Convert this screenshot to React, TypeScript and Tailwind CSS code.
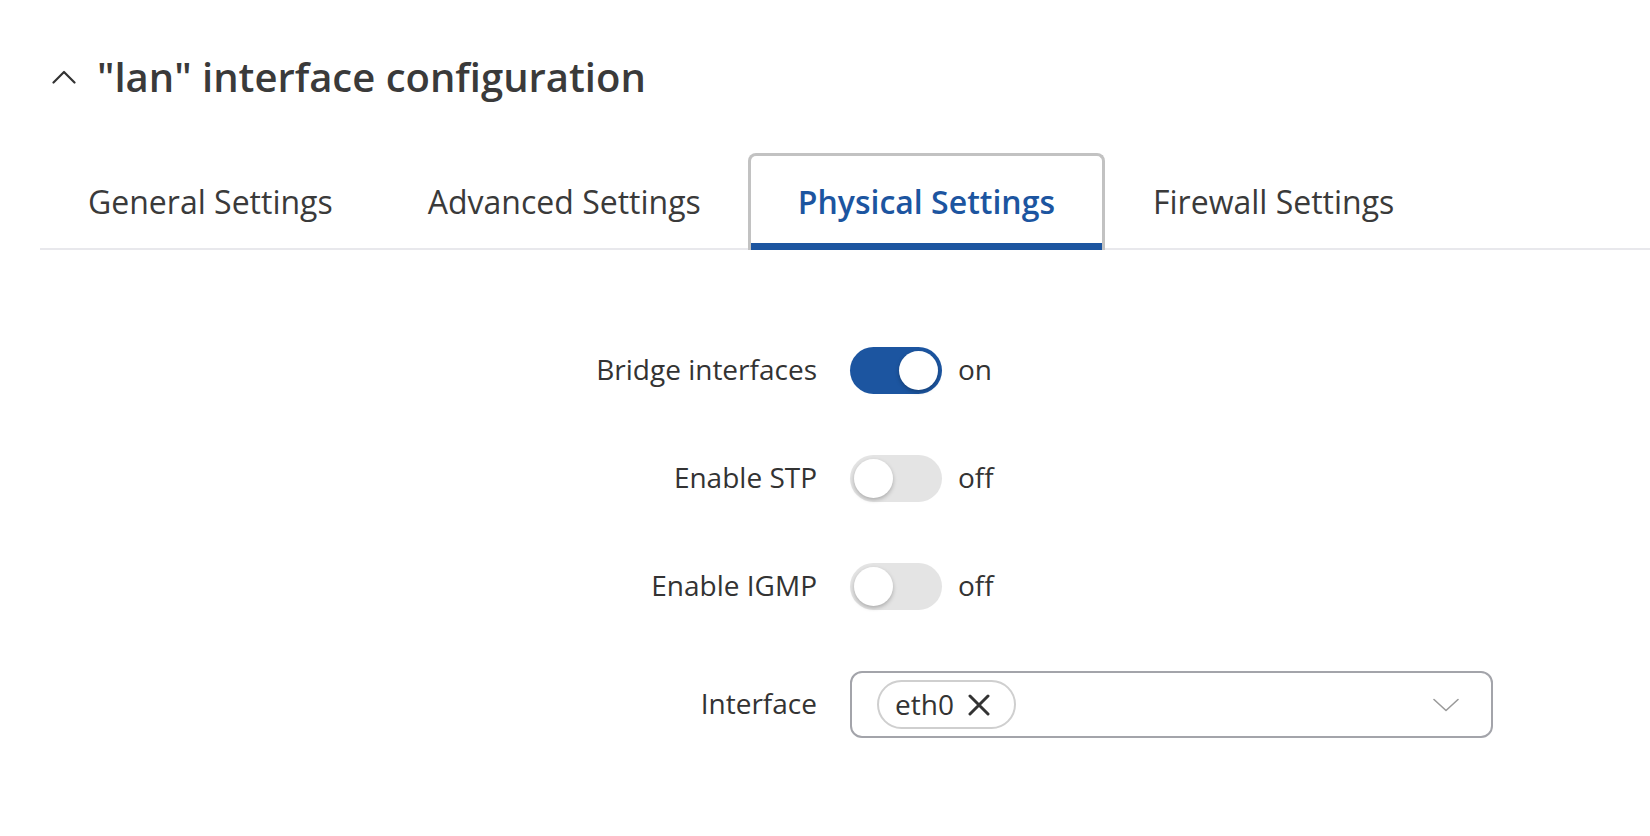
const TABS = ['General Settings', 'Advanced Settings', 'Physical Settings', 'Firewall Settings']
const ACTIVE = 'Physical Settings'

function Toggle({ on }: { on: boolean }) {
  return (
    <div className="flex items-center gap-[16px]">
      <div
        className={`flex items-center w-[92px] h-[47px] rounded-full px-[4px] ${
          on ? 'bg-[#1c55a0] justify-end' : 'bg-[#e4e4e4] justify-start'
        }`}
      >
        <div className="w-[39px] h-[39px] rounded-full bg-white shadow-[0_2px_4px_rgba(0,0,0,0.25)]" />
      </div>
      <span className="text-[28px] text-[#333] pb-[3px]">{on ? 'on' : 'off'}</span>
    </div>
  )
}

function Row({ label, children }: { label: string; children: React.ReactNode }) {
  return (
    <div className="flex items-center gap-[33px]">
      <div className="w-[817px] text-right text-[28px] text-[#333] pb-[3px]">{label}</div>
      {children}
    </div>
  )
}

export default function App() {
  return (
    <div className="w-[1650px] h-[836px] bg-white font-['Open_Sans',sans-serif] text-[#333] overflow-hidden">
      <div className="flex items-center h-[60px] mt-[47px] pl-[52px] gap-[21px]">
        <svg width="24" height="14" viewBox="0 0 24 14" fill="none" stroke="#333" strokeWidth="2.2" strokeLinecap="round" strokeLinejoin="round">
          <path d="M1.5 12.5 12 2 22.5 12.5" />
        </svg>
        <h1 className="text-[40px] font-semibold text-[#3a3a3a] leading-none">"lan" interface configuration</h1>
      </div>

      <div className="ml-[40px] mt-[46px] flex border-b-[2px] border-[#e8e8ec]">
        {TABS.map(t => {
          const active = t === ACTIVE
          return (
            <div
              key={t}
              className={`relative h-[97px] flex items-center text-[32px] -mb-[2px] rounded-t-[8px] border-[3px] border-b-0 ${
                active
                  ? 'px-[47px] border-[#c2c2c2] text-[#1c55a0] font-semibold'
                  : 'pl-[45px] pr-[44px] border-transparent text-[#3a3a3a]'
              }`}
            >
              <span className="pb-[2px]">{t}</span>
              {active && <div className="absolute left-0 right-0 bottom-0 h-[7px] bg-[#1c55a0]" />}
            </div>
          )
        })}
      </div>

      <div className="flex flex-col mt-[97px] gap-[61px]">
        <Row label="Bridge interfaces"><Toggle on /></Row>
        <Row label="Enable STP"><Toggle on={false} /></Row>
        <Row label="Enable IGMP"><Toggle on={false} /></Row>
        <Row label="Interface">
          <div className="w-[643px] h-[67px] rounded-[12px] border-[2px] border-[#a3a4aa] flex items-center pl-[25px] pr-[32px]">
            <div className="flex items-center gap-[14px] h-[49px] pl-[16px] pr-[24px] rounded-full border-[2px] border-[#cfcfcf]">
              <span className="text-[28px] text-[#333] pb-[2px]">eth0</span>
              <svg width="22" height="22" viewBox="0 0 22 22" fill="none" stroke="#333" strokeWidth="3" strokeLinecap="round">
                <path d="M2 2 20 20M20 2 2 20" />
              </svg>
            </div>
            <svg className="ml-auto" width="26" height="14" viewBox="0 0 26 14" fill="none" stroke="#9a9a9a" strokeWidth="1.6" strokeLinecap="round" strokeLinejoin="round">
              <path d="M1 1.5 13 12.5 25 1.5" />
            </svg>
          </div>
        </Row>
      </div>
    </div>
  )
}
